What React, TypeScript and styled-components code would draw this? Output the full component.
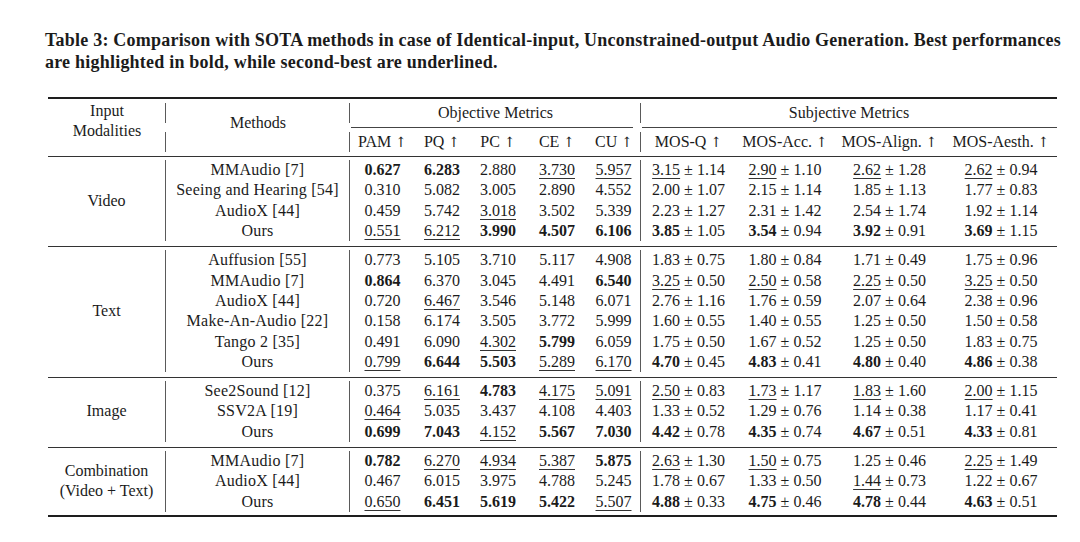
import { FC, Fragment } from "react";
import styled, { createGlobalStyle } from "styled-components";

const GlobalStyle = createGlobalStyle`
  body {
    margin: 0;
    background-color: #ffffff;
    font-family: "Liberation Serif", "Times New Roman", serif;
    color: #1b1b1b;
  }
`;

const COLUMNS = "118px 184px 65px 54px 58px 60px 54px 95px 98px 111px 112px";

const Page = styled.main`
  width: 1080px;
  height: 542px;
  padding: 29px 0 0 45px;
  box-sizing: border-box;
  overflow: hidden;
`;

const Caption = styled.p`
  margin: 0;
  font-size: 18px;
  letter-spacing: 0.22px;
  line-height: 22px;
  font-weight: 700;
  white-space: nowrap;
`;

const StyledTable = styled.div`
  margin: 24px 0 0 3px;
  width: 1009px;
  border-top: 2px solid #1e1e1e;
  border-bottom: 2px solid #1e1e1e;
  font-size: 16px;
`;

const HeaderGrid = styled.header`
  display: grid;
  grid-template-columns: ${COLUMNS};
  grid-template-rows: 4px 20px 9px 20px 4px;
`;

const HeadCell = styled.div<{ $col: string; $row: string; $top?: number }>`
  grid-column: ${(p) => p.$col};
  grid-row: ${(p) => p.$row};
  text-align: center;
  line-height: 20px;
  padding-top: ${(p) => p.$top ?? 0}px;
  white-space: nowrap;
`;

const Arrow = styled.span`
  font-family: "DejaVu Serif", serif;
  font-size: 14px;
`;

const VSegment = styled.div<{ $col: number; $row: number }>`
  grid-column: ${(p) => p.$col};
  grid-row: ${(p) => p.$row};
  justify-self: end;
  width: 1px;
  background-color: #5a5a5a;
`;

/* trimmed rule under a spanning header, like \cmidrule(lr) */
const PartialRule = styled.div<{ $col: string; $left: number; $right: number }>`
  grid-column: ${(p) => p.$col};
  grid-row: 3;
  align-self: center;
  height: 1px;
  margin: 0 ${(p) => p.$right}px 0 ${(p) => p.$left}px;
  background-color: #444;
`;

const Group = styled.section<{ $last?: boolean }>`
  display: grid;
  grid-template-columns: ${COLUMNS};
  grid-auto-rows: 20.3px;
  padding: 3px 0 ${(p) => (p.$last ? 3 : 5)}px;
  border-top: 1px solid #333;
`;

const Modality = styled.div<{ $rows: number }>`
  grid-column: 1;
  grid-row: 1 / span ${(p) => p.$rows};
  display: flex;
  align-items: center;
  justify-content: center;
  text-align: center;
  line-height: 20px;
  border-right: 1px solid #5a5a5a;
`;

const Cell = styled.div<{ $divider?: boolean }>`
  display: flex;
  align-items: center;
  justify-content: center;
  white-space: nowrap;
  line-height: 20px;
  border-right: ${(p) => (p.$divider ? "1px solid #5a5a5a" : "none")};
`;

const MethodCell = styled(Cell)`
  letter-spacing: 0.25px;
`;

const Strong = styled.b`
  font-weight: 700;
`;

const Under = styled.span`
  text-decoration: underline;
  text-decoration-thickness: 1px;
  text-underline-offset: 3px;
  text-decoration-color: #333;
`;

const PlusMinus = styled.span`
  margin: 0 4px;
`;

interface IRow {
  method: string;
  objective: string[];
  subjective: string[];
}

interface IGroup {
  modality: string[];
  rows: IRow[];
}

const GROUPS: IGroup[] = [
  {
    modality: ["Video"],
    rows: [
      {
        method: "MMAudio [7]",
        objective: ["*0.627", "*6.283", "2.880", "_3.730", "_5.957"],
        subjective: ["_3.15|1.14", "_2.90|1.10", "_2.62|1.28", "_2.62|0.94"],
      },
      {
        method: "Seeing and Hearing [54]",
        objective: ["0.310", "5.082", "3.005", "2.890", "4.552"],
        subjective: ["2.00|1.07", "2.15|1.14", "1.85|1.13", "1.77|0.83"],
      },
      {
        method: "AudioX [44]",
        objective: ["0.459", "5.742", "_3.018", "3.502", "5.339"],
        subjective: ["2.23|1.27", "2.31|1.42", "2.54|1.74", "1.92|1.14"],
      },
      {
        method: "Ours",
        objective: ["_0.551", "_6.212", "*3.990", "*4.507", "*6.106"],
        subjective: ["*3.85|1.05", "*3.54|0.94", "*3.92|0.91", "*3.69|1.15"],
      },
    ],
  },
  {
    modality: ["Text"],
    rows: [
      {
        method: "Auffusion [55]",
        objective: ["0.773", "5.105", "3.710", "5.117", "4.908"],
        subjective: ["1.83|0.75", "1.80|0.84", "1.71|0.49", "1.75|0.96"],
      },
      {
        method: "MMAudio [7]",
        objective: ["*0.864", "6.370", "3.045", "4.491", "*6.540"],
        subjective: ["_3.25|0.50", "_2.50|0.58", "_2.25|0.50", "_3.25|0.50"],
      },
      {
        method: "AudioX [44]",
        objective: ["0.720", "_6.467", "3.546", "5.148", "6.071"],
        subjective: ["2.76|1.16", "1.76|0.59", "2.07|0.64", "2.38|0.96"],
      },
      {
        method: "Make-An-Audio [22]",
        objective: ["0.158", "6.174", "3.505", "3.772", "5.999"],
        subjective: ["1.60|0.55", "1.40|0.55", "1.25|0.50", "1.50|0.58"],
      },
      {
        method: "Tango 2 [35]",
        objective: ["0.491", "6.090", "_4.302", "*5.799", "6.059"],
        subjective: ["1.75|0.50", "1.67|0.52", "1.25|0.50", "1.83|0.75"],
      },
      {
        method: "Ours",
        objective: ["_0.799", "*6.644", "*5.503", "_5.289", "_6.170"],
        subjective: ["*4.70|0.45", "*4.83|0.41", "*4.80|0.40", "*4.86|0.38"],
      },
    ],
  },
  {
    modality: ["Image"],
    rows: [
      {
        method: "See2Sound [12]",
        objective: ["0.375", "_6.161", "*4.783", "_4.175", "_5.091"],
        subjective: ["_2.50|0.83", "_1.73|1.17", "_1.83|1.60", "_2.00|1.15"],
      },
      {
        method: "SSV2A [19]",
        objective: ["_0.464", "5.035", "3.437", "4.108", "4.403"],
        subjective: ["1.33|0.52", "1.29|0.76", "1.14|0.38", "1.17|0.41"],
      },
      {
        method: "Ours",
        objective: ["*0.699", "*7.043", "_4.152", "*5.567", "*7.030"],
        subjective: ["*4.42|0.78", "*4.35|0.74", "*4.67|0.51", "*4.33|0.81"],
      },
    ],
  },
  {
    modality: ["Combination", "(Video + Text)"],
    rows: [
      {
        method: "MMAudio [7]",
        objective: ["*0.782", "_6.270", "_4.934", "_5.387", "*5.875"],
        subjective: ["_2.63|1.30", "_1.50|0.75", "1.25|0.46", "_2.25|1.49"],
      },
      {
        method: "AudioX [44]",
        objective: ["0.467", "6.015", "3.975", "4.788", "5.245"],
        subjective: ["1.78|0.67", "1.33|0.50", "_1.44|0.73", "1.22|0.67"],
      },
      {
        method: "Ours",
        objective: ["_0.650", "*6.451", "*5.619", "*5.422", "_5.507"],
        subjective: ["*4.88|0.33", "*4.75|0.46", "*4.78|0.44", "*4.63|0.51"],
      },
    ],
  },
];

const OBJECTIVE = ["PAM", "PQ", "PC", "CE", "CU"];
const SUBJECTIVE = ["MOS-Q", "MOS-Acc.", "MOS-Align.", "MOS-Aesth."];

// "*" marks the best value (bold), "_" the second best (underlined)
const Mark: FC<{ value: string }> = ({ value }) => {
  if (value.startsWith("*")) return <Strong>{value.slice(1)}</Strong>;
  if (value.startsWith("_")) return <Under>{value.slice(1)}</Under>;
  return <>{value}</>;
};

const Score: FC<{ value: string }> = ({ value }) => {
  const [mean, std] = value.split("|");
  return (
    <>
      <Mark value={mean} />
      <PlusMinus>±</PlusMinus>
      {std}
    </>
  );
};

const Header: FC = () => (
  <HeaderGrid role="row">
    <VSegment $col={1} $row={2} />
    <VSegment $col={1} $row={4} />
    <VSegment $col={2} $row={2} />
    <VSegment $col={2} $row={4} />
    <VSegment $col={7} $row={2} />
    <VSegment $col={7} $row={4} />
    <HeadCell $col="1" $row="1 / 6" $top={2}>
      Input
      <br />
      Modalities
    </HeadCell>
    <HeadCell $col="2" $row="1 / 6" $top={14}>
      Methods
    </HeadCell>
    <HeadCell $col="3 / 8" $row="2">
      Objective Metrics
    </HeadCell>
    <HeadCell $col="8 / 12" $row="2">
      Subjective Metrics
    </HeadCell>
    <PartialRule $col="3 / 8" $left={1} $right={8} />
    <PartialRule $col="8 / 12" $left={1} $right={0} />
    {OBJECTIVE.map((name, i) => (
      <HeadCell key={name} $col={String(i + 3)} $row="4">
        {name} <Arrow>↑</Arrow>
      </HeadCell>
    ))}
    {SUBJECTIVE.map((name, i) => (
      <HeadCell key={name} $col={String(i + 8)} $row="4">
        {name} <Arrow>↑</Arrow>
      </HeadCell>
    ))}
  </HeaderGrid>
);

const Body: FC<{ group: IGroup; last: boolean }> = ({ group, last }) => (
  <Group $last={last}>
    <Modality $rows={group.rows.length}>
      <div>
        {group.modality.map((line) => (
          <div key={line}>{line}</div>
        ))}
      </div>
    </Modality>
    {group.rows.map((row) => (
      <Fragment key={row.method}>
        <MethodCell $divider>{row.method}</MethodCell>
        {row.objective.map((v, i) => (
          <Cell key={`o${i}`} $divider={i === 4}>
            <Mark value={v} />
          </Cell>
        ))}
        {row.subjective.map((v, i) => (
          <Cell key={`s${i}`}>
            <Score value={v} />
          </Cell>
        ))}
      </Fragment>
    ))}
  </Group>
);

export default function App() {
  return (
    <>
      <GlobalStyle />
      <Page>
        <Caption>
          Table 3: Comparison with SOTA methods in case of Identical-input, Unconstrained-output Audio Generation. Best
          performances
          <br />
          are highlighted in bold, while second-best are underlined.
        </Caption>
        <StyledTable role="table">
          <Header />
          {GROUPS.map((group, i) => (
            <Body key={group.modality.join(" ")} group={group} last={i === GROUPS.length - 1} />
          ))}
        </StyledTable>
      </Page>
    </>
  );
}
